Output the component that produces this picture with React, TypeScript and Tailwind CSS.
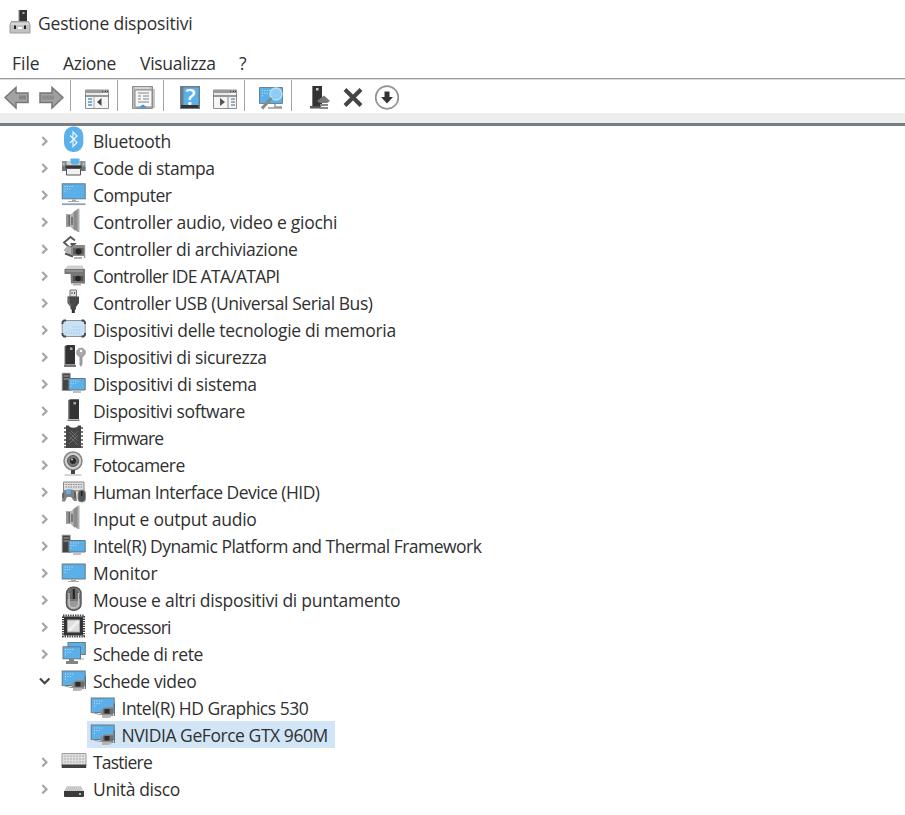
import React from "react";

const BLUE = "#5bb0ea";
const DARK = "#3a3a3a";

type IconName =
  | "bluetooth" | "printer" | "computer" | "speaker" | "storage" | "ide" | "usb" | "memory"
  | "security" | "system" | "software" | "firmware" | "camera" | "hid" | "monitor" | "mouse"
  | "cpu" | "network" | "display" | "keyboard" | "disk";

const Dots = ({ x, y }: { x: number; y: number }) => (
  <g fill="#c4e4fa">
    {[0, 1, 2, 3].map((i) => <rect key={i} x={x + i * 2.4} y={y} width="1" height="1" />)}
    {[0, 1, 2].map((i) => <rect key={i} x={x + i * 2.4} y={y + 2.6} width="1" height="1" />)}
    <rect x={x} y={y + 5.2} width="1" height="1" />
  </g>
);

const SpeakerArt = () => (
  <>
    <path d="M5 6.500h5v12H5z" fill="#6b6b6b" />
    <path d="M5 6.500h2.500v12H5z" fill="#969696" />
    <path d="M9 7 14 3v20l-5-4.500z" fill="#b5b5b5" />
    <path d="M12.500 4 17 .7V24l-4.500-3z" fill="#8c8c8c" />
    <path d="M16.500 .7h2V24h-2z" fill="#b0b0b0" />
    <path d="M11 9v8" stroke="#666" strokeWidth="1.500" />
  </>
);

const CardArt = () => (
  <>
    <path d="M10.500 15.500h3l1.500-2.500h8v9h-4v1.500h-7V20h-1.500z" fill="#8f8f8f" />
    <path d="M13 14.500h10v5.500H13z" fill="#6f6f6f" />
    <path d="M14.500 15h5v4.500h-5z" fill="#2c2c2c" />
    <path d="M24.300 9.500v12.500" stroke="#666" strokeWidth="1.200" />
    <path d="M12 22.300h9" stroke="#b4b4b4" strokeWidth="2.600" />
  </>
);

const TowerArt = () => (
  <>
    <path d="M1.200 3.200h8v17.300h-8z" fill="#444" stroke="#929292" strokeWidth=".8" />
    <path d="M2.500 6h5.500M2.500 9h5.500" stroke="#aaa" />
    <path d="M7.800 8.500h16.400v11.500H7.800z" fill={BLUE} stroke="#66757d" />
    <path d="M12 22h8" stroke="#aaa" strokeWidth="1.500" />
    <Dots x={9.500} y={10.500} />
  </>
);

const art: Record<IconName, React.ReactNode> = {
  bluetooth: (
    <>
      <rect x="3" y="-.5" width="19.300" height="25.500" rx="9" fill={BLUE} />
      <path d="M9 8.500l7 7-4 4V5l4 4-7 7" fill="none" stroke="#e8f6ff" strokeWidth="1.200" />
    </>
  ),
  printer: (
    <>
      <path d="M1 7h23.500v10H1z" fill="#8d979b" />
      <path d="M5 7v5h15V7" fill="#c9d0d3" stroke="#67767d" />
      <path d="M9.500 4.500h9v4l-2 2h-5l-2-2z" fill={BLUE} />
      <path d="M1 12.500h23.500v4.500H1z" fill="#6e777b" />
      <path d="M4.500 11.500h16v3h-16z" fill="#343434" />
      <path d="M5.500 14.500h14V21h-14z" fill="#f2f2f2" stroke="#555" />
      <circle cx="2.800" cy="10" r=".8" fill="#ddd" />
      <circle cx="22.500" cy="10" r=".8" fill="#ddd" />
    </>
  ),
  computer: (
    <>
      <rect x="1.200" y="2.800" width="23" height="15" fill={BLUE} stroke="#697981" />
      <Dots x={3.500} y={5} />
      <path d="M11 18.500h4V20h3v1H7v-1h4z" fill="#a1a7aa" />
      <path d="M1 23.200h23.500" stroke="#8da3b4" strokeWidth="1.800" />
    </>
  ),
  speaker: <SpeakerArt />,
  storage: (
    <>
      <path d="M14 5.500 9.500 2 3 7.500 9 13l4.500-4h-4" fill="none" stroke="#555" strokeWidth="1.800" />
      <path d="M2.500 15l4-4 7 3v7l-4 .5z" fill="#b3b3b3" />
      <path d="M4 18.500l8 3" stroke="#555" strokeWidth="2" />
      <path d="M10 12l3-2h10v11H13l-3-2z" fill="#8a8a8a" />
      <path d="M12 13h11v6.500H12z" fill="#5f5f5f" />
      <circle cx="17.500" cy="16.500" r="3" fill="#252525" />
      <path d="M23.500 10v13M13 23h8" stroke="#999" strokeWidth="1.400" />
    </>
  ),
  ide: (
    <>
      <path d="M3.500 7 7 3.500h14l2.500 3.500z" fill="#d0d0d0" />
      <path d="M3.500 7H24v5H3.500z" fill="#777" />
      <path d="M5 9h17" stroke="#aaa" />
      <path d="M9.500 12H24v9.500H10z" fill="#777" />
      <path d="M12 14h10v5H12z" fill="#505050" />
      <circle cx="17" cy="16.500" r="2.700" fill="#222" />
      <path d="M12 22.500h8" stroke="#b0b0b0" strokeWidth="2" />
    </>
  ),
  usb: (
    <>
      <path d="M9 1h6.500v7H9z" fill="#ddd" stroke="#777" />
      <path d="M11 3v2m2.500-2v2" stroke="#555" />
      <path d="M6.500 7.500h11.500V14l-3 4v2.500h-5.500V18l-3-4z" fill="#484848" />
      <path d="M8 9v5l2 3" stroke="#878787" fill="none" />
      <path d="M12.300 20v4" stroke="#333" strokeWidth="3" />
    </>
  ),
  memory: (
    <>
      <rect x="1.200" y="4.500" width="23" height="16" rx="2.500" fill="#c9e1f3" stroke="#88949c" />
      <path d="M5 17h15M8 14h13M11 11h10" stroke="#8cc6ee" strokeDasharray="1 1.500" />
      <path d="M1.500 8V6l1.500-1.500h2M20.500 4.500h2L24 6v2M1.500 17v2L3 20.500h2M20.500 20.500h2L24 19v-2" fill="none" stroke="#444" strokeWidth="1.800" />
    </>
  ),
  security: (
    <>
      <path d="M4 3l2-1h8v19.500H4z" fill="#333" />
      <path d="M4 3v19" stroke="#777" />
      <path d="M9 4.500h2.500V7H9z" fill="#aaa" />
      <path d="M3 22h12v2H3z" fill="#777" />
      <circle cx="20" cy="9.500" r="4.300" fill="#a9a9a9" stroke="#959595" />
      <circle cx="20" cy="8" r="1.200" fill="#fff" />
      <path d="M18.500 13h3v8L20 24l-1.500-2z" fill="#9b9b9b" />
    </>
  ),
  system: <TowerArt />,
  software: (
    <>
      <path d="M7.500 3l2-.8H18V22H7.500z" fill="#333" />
      <path d="M8 3v19" stroke="#777" />
      <path d="M12.500 5H15v2.500h-2.500z" fill="#aaa" />
      <path d="M6.500 22.500h12V24h-12z" fill="#777" />
    </>
  ),
  firmware: (
    <>
      <path d="M3 4h3.500M3 8h3.500M3 12h3.500M3 16h3.500M3 20h3.500M3 23h3.500M18.500 4H22m-3.500 4H22m-3.500 4H22m-3.500 4H22m-3.500 4H22m-3.500 3H22" stroke="#777" strokeWidth="2" />
      <path d="M5 1.500h3c0 3 9 3 9 0h3V24H5z" fill="#454545" />
      <path d="M8 8l9 9M8 12l9 9M10 7l7 7m0-7-9 9m9-5-9 9" stroke="#747474" strokeWidth=".8" />
    </>
  ),
  camera: (
    <>
      <circle cx="12" cy="10" r="9" fill="#d0d0d0" stroke="#858585" strokeWidth="1.500" />
      <circle cx="12" cy="10" r="5.500" fill="#777" stroke="#555" />
      <circle cx="12" cy="10" r="3" fill="#292929" />
      <circle cx="11" cy="8.500" r="1" fill="#ccc" />
      <path d="M12 19v4" stroke="#444" strokeWidth="4" />
      <path d="M3.500 24h17" stroke="#aaa" />
    </>
  ),
  hid: (
    <>
      <path d="M2.500 4H23v9H2.500z" fill="#ddd" stroke="#888" />
      <path d="M4.500 6.500H22M4.500 9H22" stroke="#888" strokeDasharray="1.500 1" />
      <path d="M2 13c3-2 10-2 13 0l1 10h-3l-3-4H6l-2 4.500H1z" fill="#808080" />
      <path d="M2 15v5m12-6v6" stroke="#555" strokeWidth="1.500" />
      <circle cx="7.500" cy="14" r="2.500" fill={BLUE} />
      <rect x="17" y="12" width="7.500" height="12" rx="3.500" fill="#555" stroke="#888" />
      <path d="M20.700 13v5" stroke="#222" strokeWidth="1.500" />
    </>
  ),
  monitor: (
    <>
      <rect x="1.200" y="5" width="23" height="15" fill={BLUE} stroke="#697981" />
      <Dots x={3.500} y={7.500} />
      <path d="M10 20.500h5V22h3v1H7v-1h3z" fill="#aaa" />
    </>
  ),
  mouse: (
    <>
      <rect x="5.500" y="1.200" width="14.500" height="23" rx="6.500" fill="#999" stroke="#555" strokeWidth="1.500" />
      <path d="M6 13c0-15 13-15 13 0z" fill="#666" />
      <path d="M8 7v12c2 4 7 4 9.500 0V7" fill="none" stroke="#c6c6c6" strokeWidth="1.300" />
      <path d="M12.800 3v10" stroke="#222" strokeWidth="2" />
      <path d="M9 14h8" stroke="#555" />
    </>
  ),
  cpu: (
    <>
      <rect x="2" y="2.500" width="21" height="21" fill="none" stroke="#444" strokeWidth="2" strokeDasharray="1.400 1" />
      <rect x="3" y="3.500" width="19" height="19" fill="#333" />
      <rect x="6.500" y="7" width="12" height="12" fill="#ddd" stroke="#aaa" />
      <path d="M8 17.500 17.500 8" stroke="#f0f0f0" strokeWidth="3" />
    </>
  ),
  network: (
    <>
      <rect x="7" y="2.500" width="17.300" height="12" fill={BLUE} stroke="#697981" />
      <path d="M18 16v3h5" stroke="#aaa" fill="none" />
      <rect x="2" y="6.800" width="17.500" height="12" fill={BLUE} stroke="#697981" />
      <Dots x={4} y={9} />
      <path d="M8 19h5v2h4v3H5v-3h3z" fill="#858585" />
    </>
  ),
  display: (
    <>
      <rect x="1.200" y="4" width="23" height="14.500" fill={BLUE} stroke="#697981" />
      <Dots x={4} y={6.500} />
      <path d="M2 18.500l8 2h3" stroke="#999" fill="none" />
      <CardArt />
    </>
  ),
  keyboard: (
    <>
      <path d="M1 5.500h24V18H1z" fill="#dedede" stroke="#9d9d9d" />
      <path d="M3 8h20.500M3 11h20.500M3 14h20.500" stroke="#adadad" strokeDasharray="2 1" />
      <path d="M.7 16.500h24.500V20H.7z" fill="#3f3f3f" />
    </>
  ),
  disk: (
    <>
      <path d="M3.500 16 6 11h14l2.500 5z" fill="#d3d3d3" />
      <path d="M5 13h16M4 15h18" stroke="#aaa" strokeDasharray="1 1" />
      <path d="M3 16h20v5q0 1-1 1H4q-1 0-1-1z" fill={DARK} />
      <path d="M18 19h2" stroke="#ddd" strokeWidth="1.500" />
    </>
  ),
};

type Device = { label: string; icon: IconName; tracking: string; open?: boolean; child?: boolean; selected?: boolean };

const devices: Device[] = [
  { label: "Bluetooth", icon: "bluetooth", tracking: "tracking-[-0.3px]" },
  { label: "Code di stampa", icon: "printer", tracking: "tracking-[-0.4px]" },
  { label: "Computer", icon: "computer", tracking: "tracking-[-0.5px]" },
  { label: "Controller audio, video e giochi", icon: "speaker", tracking: "tracking-[-0.27px]" },
  { label: "Controller di archiviazione", icon: "storage", tracking: "tracking-[-0.32px]" },
  { label: "Controller IDE ATA/ATAPI", icon: "ide", tracking: "tracking-[-0.72px]" },
  { label: "Controller USB (Universal Serial Bus)", icon: "usb", tracking: "tracking-[-0.44px]" },
  { label: "Dispositivi delle tecnologie di memoria", icon: "memory", tracking: "tracking-[-0.29px]" },
  { label: "Dispositivi di sicurezza", icon: "security", tracking: "tracking-[-0.37px]" },
  { label: "Dispositivi di sistema", icon: "system", tracking: "tracking-[-0.31px]" },
  { label: "Dispositivi software", icon: "software", tracking: "tracking-[-0.36px]" },
  { label: "Firmware", icon: "firmware", tracking: "tracking-[-0.85px]" },
  { label: "Fotocamere", icon: "camera", tracking: "tracking-[-0.58px]" },
  { label: "Human Interface Device (HID)", icon: "hid", tracking: "tracking-[-0.53px]" },
  { label: "Input e output audio", icon: "speaker", tracking: "tracking-[-0.22px]" },
  { label: "Intel(R) Dynamic Platform and Thermal Framework", icon: "system", tracking: "tracking-[-0.52px]" },
  { label: "Monitor", icon: "monitor", tracking: "tracking-[-0.11px]" },
  { label: "Mouse e altri dispositivi di puntamento", icon: "mouse", tracking: "tracking-[-0.27px]" },
  { label: "Processori", icon: "cpu", tracking: "tracking-[-0.74px]" },
  { label: "Schede di rete", icon: "network", tracking: "tracking-[-0.47px]" },
  { label: "Schede video", icon: "display", tracking: "tracking-[-0.38px]", open: true },
  { label: "Intel(R) HD Graphics 530", icon: "display", tracking: "tracking-[-0.5px]", child: true },
  { label: "NVIDIA GeForce GTX 960M", icon: "display", tracking: "tracking-[-0.44px]", child: true, selected: true },
  { label: "Tastiere", icon: "keyboard", tracking: "tracking-[-0.78px]" },
  { label: "Unità disco", icon: "disk", tracking: "tracking-[-0.36px]" },
];

function TreeRow({ device }: { device: Device }) {
  return (
    <div className={`flex h-[27px] items-center ${device.child ? "pl-[87px]" : "pl-[38px]"}`}>
      {!device.child && (
        <svg className="mr-[9px] h-[14px] w-[14px] shrink-0" viewBox="0 0 14 14" fill="none" strokeWidth="2.200">
          {device.open ? <path d="M2 4.500l4.700 4.700L11.400 4.500" stroke="#444" /> : <path d="M4.300 3l4.200 4.200-4.200 4.200" stroke="#a6a6a6" />}
        </svg>
      )}
      <div className={`flex h-[27px] items-center ${device.child ? "pr-[7px] pl-[2.5px]" : ""} ${device.selected ? "bg-[#d1e5f6]" : ""}`}>
        <svg className="h-[27px] w-[26px] shrink-0 overflow-visible" viewBox="0 0 26 27">{art[device.icon]}</svg>
        <span className={`ml-[6px] pt-[2px] whitespace-pre ${device.tracking}`}>{device.label}</span>
      </div>
    </div>
  );
}

const Separator = ({ className }: { className: string }) => <div className={`h-[31px] w-px shrink-0 bg-[#a5a5a5] ${className}`} />;

function Tool({ className, children }: { className: string; children: React.ReactNode }) {
  return <svg className={`h-[34px] w-[26px] shrink-0 ${className}`} viewBox="0 0 26 34">{children}</svg>;
}

const WindowArt = () => (
  <>
    <path d="M1.500 11h23v18.500h-23z" fill="#f5f5f5" stroke="#8e8e8e" />
    <path d="M1 11h24v3H1z" fill="#999" />
    <path d="M1 17h24" stroke="#777" strokeWidth="1.500" />
    <path d="M3 15h14" stroke="#ddd" />
    <path d="M18 12.500h1m2 0h1m1 0h1" stroke="#333" />
  </>
);

export default function App() {
  return (
    <div className="h-[815px] w-[905px] overflow-hidden bg-white font-['Open_Sans','Noto_Sans',sans-serif] text-[17.5px] leading-[27px] tracking-[-0.2px] text-[#303030]">
      <header className="flex h-[44px] items-center pl-[9px]">
        <svg className="h-[26px] w-[22px]" viewBox="0 0 22 26">
          <path d="M10 1h8v13h-8z" fill="#343434" />
          <path d="M10 1v13" stroke="#888" />
          <path d="M13.500 3h2v2h-2z" fill="#aaa" />
          <path d="M2.500 12.500h17l1.500 3V24H1v-8.500z" fill="#c1c1c1" stroke="#9c9c9c" />
          <path d="M2 15h18" stroke="#eee" />
          <path d="M5 16.500h2v3.500H5zm10 0h2v3.500h-2z" fill="#222" />
          <path d="M9 19h4" stroke="#fff" strokeWidth="2" />
        </svg>
        <h1 className="ml-[7px] pt-[2px] whitespace-pre">Gestione dispositivi</h1>
      </header>
      <nav className="flex h-[34px] items-center pt-[4px]">
        <span className="ml-[12px] w-[51px] tracking-normal">File</span>
        <span className="w-[77px] tracking-[-0.3px]">Azione</span>
        <span className="w-[99px] tracking-[-0.3px]">Visualizza</span>
        <span>?</span>
      </nav>
      <div className="h-[2px] border-t border-[#9a9a9a] bg-[#ddd]" />
      <div className="flex h-[33px] items-center pb-[2px]">
        <Tool className="ml-[4px]">
          <path d="M1 18.500 12 8.500v5.500h12v9.500H12v5.500z" fill="#a3a3a3" stroke="#777" strokeWidth="1.500" />
          <path d="M15 16.500h7v4h-7z" fill="#858585" />
        </Tool>
        <Tool className="ml-[8px]">
          <path d="M25 18.500 14 8.500v5.500H2v9.500h12v5.500z" fill="#a0a0a0" stroke="#777" strokeWidth="1.500" />
          <path d="M4 16.500h12v4H4z" fill="#8c8c8c" />
        </Tool>
        <Separator className="ml-[6px]" />
        <Tool className="ml-[13px]">
          <WindowArt />
          <path d="M10 18v11" stroke="#aaa" />
          <path d="M4 20h4m-4 3h4m-4 3h4" stroke="#4d9bd1" strokeWidth="1.300" />
          <path d="M17.500 19v8L13 23z" fill="#444" />
        </Tool>
        <Separator className="ml-[7px]" />
        <Tool className="ml-[13px]">
          <path d="M1.500 7.500h20v22h-20z" fill="#bbb" stroke="#8d8d8d" />
          <path d="M4 11h17v17H4z" fill="#f7f7f7" stroke="#888" />
          <path d="M4 9h15" stroke="#eee" />
          <path d="M7 14h11M7 17h3m2 0h6M7 20h3m2 0h6M7 23h11" stroke="#aaa" strokeWidth="1.300" />
          <path d="M8 28.500l4-3 4 3z" fill="#3293da" />
          <path d="M23 10v19" stroke="#8d8d8d" />
        </Tool>
        <Separator className="ml-[6px]" />
        <Tool className="ml-[15px]">
          <path d="M1 7h20v23H1z" fill="#707c84" />
          <path d="M4.500 8.500h15v18h-15z" fill={BLUE} />
          <path d="M2 27.500h17.500" stroke="#333" strokeWidth="3" />
          <text x="6.500" y="26" fontSize="22" fontWeight="600" fill="#fff">?</text>
        </Tool>
        <Tool className="ml-[7px]">
          <WindowArt />
          <path d="M16 18v11" stroke="#888" />
          <path d="M19 20h4m-4 3h4m-4 3h4" stroke="#8193a0" strokeWidth="1.300" />
          <path d="M8 19v8l5-4z" fill="#555" />
        </Tool>
        <Separator className="ml-[6px]" />
        <Tool className="ml-[13px]">
          <path d="M1.500 8.500h23v16h-23z" fill={BLUE} stroke="#718390" />
          <Dots x={4} y={11} />
          <path d="M17 25v3h7m-14 1h14" stroke="#999" fill="none" strokeWidth="1.500" />
          <circle cx="18" cy="15" r="6" fill="#8fcdf4" stroke="#b8e0f8" strokeWidth="1.300" />
          <path d="M13.500 19 4 29.500" stroke="#888" strokeWidth="3" />
        </Tool>
        <Separator className="ml-[7px]" />
        <Tool className="ml-[18px]">
          <path d="M2 7h10v20H2z" fill="#333" />
          <path d="M2.500 7v20" stroke="#777" />
          <path d="M6 9h2.500v2.500H6z" fill="#ccc" />
          <path d="M0 27h11v2.500H0z" fill="#555" />
          <path d="M7 22 14 16.500l6 5.500-3 2h-7z" fill="#777" />
          <path d="M10 26h8m-8 3h8" stroke="#888" strokeWidth="1.800" />
        </Tool>
        <Tool className="ml-[6px]">
          <path d="M3 10.500l16 16m0-16-16 16" stroke="#444" strokeWidth="4" />
        </Tool>
        <Tool className="ml-[6px]">
          <circle cx="13" cy="18.500" r="11.300" fill="#fff" stroke="#929292" strokeWidth="1.700" />
          <path d="M10.500 12.500h5V18h3.500l-6 6.500L7 18h3.500z" fill="#333" />
        </Tool>
      </div>
      <div className="h-[13px] border-b-[3px] border-[#777d80] bg-[#eeeeee]" />
      <main className="pt-px">
        {devices.map((device) => <TreeRow key={device.label} device={device} />)}
      </main>
    </div>
  );
}
